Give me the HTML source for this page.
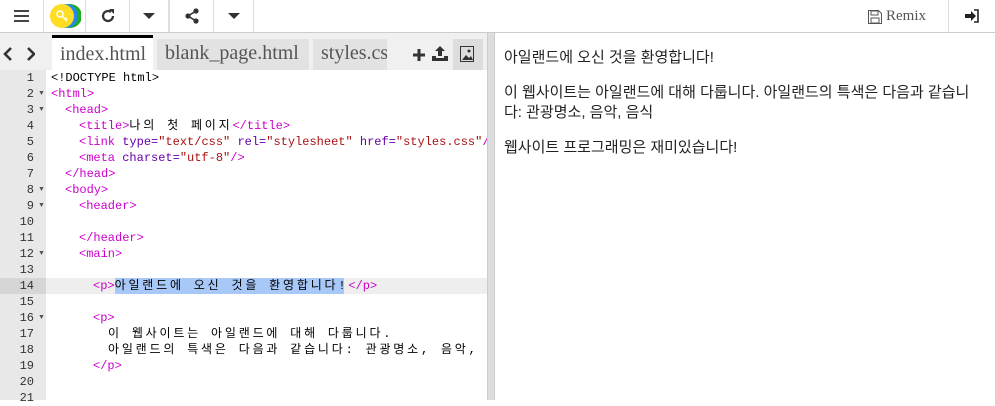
<!DOCTYPE html>
<html><head><meta charset="utf-8"><style>
*{box-sizing:border-box;margin:0;padding:0}
body{width:995px;height:400px;overflow:hidden;background:#fff;font-family:"Liberation Sans","Noto Sans CJK KR",sans-serif;position:relative}
.top{position:absolute;left:0;top:0;width:995px;height:33px;border-bottom:1px solid #ccc;background:#fff}
.tb{position:absolute;top:0;height:32px;border-right:1px solid #ddd;display:flex;align-items:center;justify-content:center;color:#333}
.tabs{position:absolute;left:0;top:33px;width:487px;height:37px;background:#f0f0f0}
.tab{position:absolute;top:6px;height:31px;background:#e2e2e2;font-family:"Liberation Serif",serif;font-size:20px;color:#555;padding:3px 8px;white-space:nowrap;overflow:hidden}
.gut{position:absolute;left:0;top:70px;width:46px;height:330px;background:#e8e8e8}
.ln{position:absolute;left:0;width:34px;text-align:right;font-family:"Liberation Mono",monospace;font-size:12px;color:#333;height:16px;line-height:16px}
.code{position:absolute;left:51px;font-family:"Liberation Mono","Noto Sans CJK KR",monospace;font-size:12px;line-height:16px;height:16px;white-space:pre;color:#000}
.k{letter-spacing:2.8px}
.t{color:#c0c}.a{color:#60a}.s{color:#a11}
.ar{position:absolute;left:38px;font-size:7px;color:#555}
.right{position:absolute;left:495px;top:33px;width:500px;height:367px;font-size:15px;color:#222;padding:15px 22px 0 9px;line-height:20px;word-break:break-all}
</style></head><body>
<div class="top">
<div class="tb" style="left:0;width:44px"><svg width="16" height="14"><rect y="1" width="15" height="2" fill="#444"/><rect y="6" width="15" height="2" fill="#444"/><rect y="11" width="15" height="2" fill="#444"/></svg></div>
<div class="tb" style="left:44px;width:42px"><svg width="32" height="28"><circle cx="21" cy="14" r="12" fill="#2a2"/><circle cx="17" cy="14" r="12" fill="#28e"/><circle cx="13" cy="14" r="12" fill="#fd2"/><circle cx="11" cy="12" r="3" fill="none" stroke="#fff" stroke-width="1.5"/><path d="M13 14l5 5M16 17l2-1" stroke="#fff" stroke-width="1.5"/></svg></div>
<div class="tb" style="left:86px;width:44px"><svg width="16" height="16"><path d="M13 8a5 5 0 1 1-2-4" fill="none" stroke="#333" stroke-width="2.2"/><path d="M9 1h5v5z" fill="#333"/></svg></div>
<div class="tb" style="left:130px;width:40px;border-right:2px solid #ddd"><svg width="12" height="8"><path d="M0 1h12L6 7z" fill="#333"/></svg></div>
<div class="tb" style="left:171px;width:43px"><svg width="16" height="16"><circle cx="12" cy="3" r="2.6" fill="#333"/><circle cx="4" cy="8" r="2.6" fill="#333"/><circle cx="12" cy="13" r="2.6" fill="#333"/><path d="M12 3L4 8l8 5" stroke="#333" stroke-width="1.6" fill="none"/></svg></div>
<div class="tb" style="left:214px;width:40px"><svg width="12" height="8"><path d="M0 1h12L6 7z" fill="#333"/></svg></div>
<svg style="position:absolute;left:868px;top:10px" width="14" height="14"><path d="M0.5 0.5h10l3 3v10h-13z" fill="none" stroke="#555"/><rect x="3" y="1" width="7" height="4" fill="none" stroke="#555"/><rect x="3" y="8" width="8" height="5" fill="none" stroke="#555"/></svg>
<div style="position:absolute;left:886px;top:8px;font-family:'Liberation Serif',serif;font-size:15px;color:#555">Remix</div>
<div class="tb" style="left:948px;width:47px;border-right:none;border-left:1px solid #ddd"><svg width="16" height="14"><path d="M1 5h6V2l5 5-5 5V9H1z" fill="#222"/><path d="M10 1h4v12h-4" stroke="#222" stroke-width="1.6" fill="none"/></svg></div>
</div>
<div class="tabs">
<svg style="position:absolute;left:3px;top:14px" width="32" height="14"><path d="M8 1L2 7l6 6M25 1l6 6-6 6" stroke="#333" stroke-width="2.6" fill="none"/></svg>
<div class="tab" style="left:52px;width:101px;background:#fff;top:2px;height:35px;border-top:3px solid #000;padding-top:5px">index.html</div>
<div class="tab" style="left:157px;width:152px">blank_page.html</div>
<div class="tab" style="left:313px;width:74px">styles.cs</div>
<svg style="position:absolute;left:412px;top:15px" width="14" height="14"><path d="M7 1v12M1 7h12" stroke="#333" stroke-width="3"/></svg>
<svg style="position:absolute;left:432px;top:13px" width="16" height="16"><path d="M8 0l5 5h-3v5H6V5H3z M0 10h4v2h8v-2h4v5H0z" fill="#333"/></svg>
<div style="position:absolute;left:453px;top:6px;width:30px;height:31px;background:#ddd"></div>
<svg style="position:absolute;left:460px;top:13px" width="15" height="17"><rect x="0.5" y="0.5" width="13" height="15" fill="none" stroke="#333"/><circle cx="9" cy="5" r="1.5" fill="#333"/><path d="M2 14l4-5 3 3 2-2 2 4z" fill="#333"/></svg>
</div>
<div style="position:absolute;left:487px;top:33px;width:8px;height:367px;background:#ddd;border-left:1px solid #ccc;border-right:1px solid #ccc"></div>
<div class="gut"></div>
<div style="position:absolute;left:0;top:278px;width:46px;height:16px;background:#d6d6d6"></div>
<div style="position:absolute;left:46px;top:278px;width:441px;height:16px;background:#eee"></div>
<div style="position:absolute;left:115px;top:278px;width:229px;height:16px;background:#a8c8f8"></div>
<div class="ln" style="top:70px">1</div><div class="ln" style="top:86px">2</div><div class="ln" style="top:102px">3</div><div class="ln" style="top:118px">4</div><div class="ln" style="top:134px">5</div><div class="ln" style="top:150px">6</div><div class="ln" style="top:166px">7</div><div class="ln" style="top:182px">8</div><div class="ln" style="top:198px">9</div><div class="ln" style="top:214px">10</div><div class="ln" style="top:230px">11</div><div class="ln" style="top:246px">12</div><div class="ln" style="top:262px">13</div><div class="ln" style="top:278px">14</div><div class="ln" style="top:294px">15</div><div class="ln" style="top:310px">16</div><div class="ln" style="top:326px">17</div><div class="ln" style="top:342px">18</div><div class="ln" style="top:358px">19</div><div class="ln" style="top:374px">20</div><div class="ln" style="top:390px">21</div>
<div class="ar" style="top:90px">&#9660;</div><div class="ar" style="top:106px">&#9660;</div><div class="ar" style="top:186px">&#9660;</div><div class="ar" style="top:202px">&#9660;</div><div class="ar" style="top:250px">&#9660;</div><div class="ar" style="top:314px">&#9660;</div>
<div style="position:absolute;left:46px;top:70px;width:441px;height:330px;overflow:hidden">
<div class="code" style="left:5px;top:0">&lt;!DOCTYPE html&gt;</div>
<div class="code t" style="left:5px;top:16px">&lt;html&gt;</div>
<div class="code t" style="left:19px;top:32px">&lt;head&gt;</div>
<div class="code" style="left:33px;top:48px"><span class="t">&lt;title&gt;</span><span class="k">나의 첫 페이지</span><span class="t">&lt;/title&gt;</span></div>
<div class="code" style="left:33px;top:64px"><span class="t">&lt;link</span> <span class="a">type=</span><span class="s">"text/css"</span> <span class="a">rel=</span><span class="s">"stylesheet"</span> <span class="a">href=</span><span class="s">"styles.css"</span><span class="t">/&gt;</span></div>
<div class="code" style="left:33px;top:80px"><span class="t">&lt;meta</span> <span class="a">charset=</span><span class="s">"utf-8"</span><span class="t">/&gt;</span></div>
<div class="code t" style="left:19px;top:96px">&lt;/head&gt;</div>
<div class="code t" style="left:19px;top:112px">&lt;body&gt;</div>
<div class="code t" style="left:33px;top:128px">&lt;header&gt;</div>
<div class="code t" style="left:33px;top:160px">&lt;/header&gt;</div>
<div class="code t" style="left:33px;top:176px">&lt;main&gt;</div>
<div class="code" style="left:47px;top:208px"><span class="t">&lt;p&gt;</span><span class="k">아일랜드에 오신 것을 환영합니다!</span><span class="t">&lt;/p&gt;</span></div>
<div class="code t" style="left:47px;top:240px">&lt;p&gt;</div>
<div class="code k" style="left:62px;top:256px">이 웹사이트는 아일랜드에 대해 다룹니다.</div>
<div class="code k" style="left:62px;top:272px">아일랜드의 특색은 다음과 같습니다: 관광명소, 음악, 음식</div>
<div class="code t" style="left:47px;top:288px">&lt;/p&gt;</div>
</div>
<div class="right">
<p>아일랜드에 오신 것을 환영합니다!</p>
<p style="margin-top:15px">이 웹사이트는 아일랜드에 대해 다룹니다. 아일랜드의 특색은 다음과 같습니다: 관광명소, 음악, 음식</p>
<p style="margin-top:15px">웹사이트 프로그래밍은 재미있습니다!</p>
</div>
</body></html>
